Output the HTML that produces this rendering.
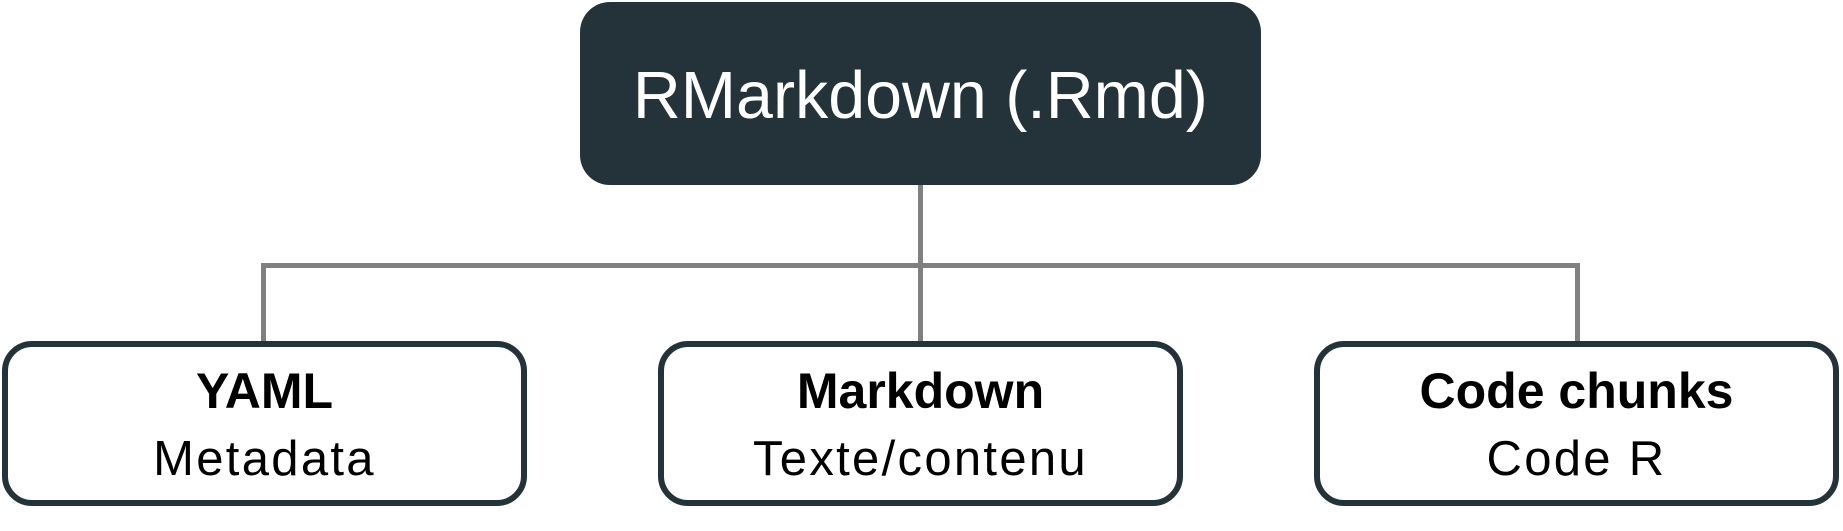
<!DOCTYPE html>
<html><head><meta charset="utf-8"><style>
html,body{margin:0;padding:0;background:#fff;}
body{width:1843px;height:531px;position:relative;overflow:hidden;font-family:"Liberation Sans",sans-serif;}
.top{position:absolute;left:580px;top:2px;width:681px;height:183px;background:#24333a;border-radius:30px;}
.title{position:absolute;left:580px;width:681px;top:62px;text-align:center;color:#fff;font-size:67px;line-height:1;}
.title span{display:inline-block;transform:scaleX(0.99);}
.l{position:absolute;background:#808080;}
.box{position:absolute;top:341px;height:153px;width:513px;border:6px solid #24333a;border-radius:30px;background:#fff;}
.t1,.t2{position:absolute;width:525px;text-align:center;line-height:1;color:#000;}
.t1{top:366px;font-size:50px;font-weight:bold;}
.t2{top:435px;font-size:49px;letter-spacing:2.3px;}
</style></head><body>
<div class="top"></div>
<div class="title"><span>RMarkdown (.Rmd)</span></div>
<div class="l" style="left:918px;top:185px;width:5px;height:157px"></div>
<div class="l" style="left:261px;top:263px;width:1319px;height:5px"></div>
<div class="l" style="left:261px;top:263px;width:5px;height:79px"></div>
<div class="l" style="left:1575px;top:263px;width:5px;height:79px"></div>
<div class="box" style="left:2px"></div>
<div class="box" style="left:658px"></div>
<div class="box" style="left:1314px"></div>
<div class="t1" style="left:2px">YAML</div>
<div class="t2" style="left:2px">Metadata</div>
<div class="t1" style="left:658px">Markdown</div>
<div class="t2" style="left:658px">Texte/contenu</div>
<div class="t1" style="left:1314px">Code chunks</div>
<div class="t2" style="left:1314px">Code R</div>
</body></html>
